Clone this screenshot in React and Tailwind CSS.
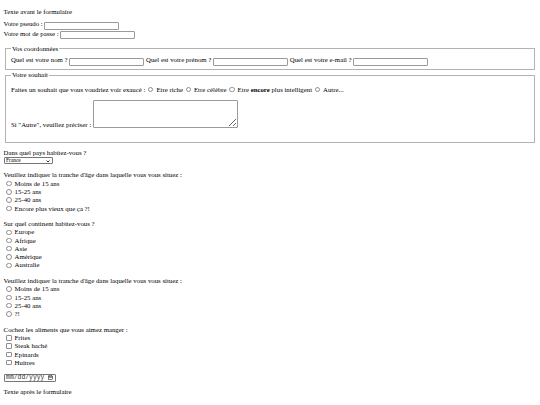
import React from 'react';

// champs et boutons à l'échelle de la capture
const txt = 'w-[75px] h-[8px] border border-[#9a9a9a] rounded-[1px] bg-white align-[-1.5px]';

const Radio = ({ name }) => (
  <input
    type="radio"
    name={name}
    className="appearance-none inline-block w-[5.4px] h-[5.4px] rounded-full border border-[#8e8e8e] bg-white ml-[2.6px] mr-[3px] align-[-0.6px]"
  />
);

const Check = () => (
  <input
    type="checkbox"
    className="appearance-none inline-block w-[5.4px] h-[5.4px] rounded-[1px] border border-[#8e8e8e] bg-white ml-[2.6px] mr-[3px] align-[-0.6px]"
  />
);

const RadioList = ({ name, items }) => (
  <>
    {items.map((item) => (
      <div key={item}>
        <Radio name={name} />
        <label>{item}</label>
      </div>
    ))}
  </>
);

const App = () => {
  return (
    <div className="font-['Liberation_Serif',serif] text-[6.8px] leading-[8.3px] text-black bg-white min-h-[405px] px-[3.6px] pt-[3px]">
      <p className="mt-[5.4px] mb-[3.4px]">Texte avant le formulaire</p>

      <form>
        <p className="mt-[3.4px] mb-[5.4px]">
          <label>Votre pseudo : </label>
          <input type="text" className={txt} />
          <br />
          <label>Votre mot de passe : </label>
          <input type="password" className={txt} />
        </p>

        <fieldset className="mx-[1px] mt-[2px] border border-[#b3b3b3] px-[5.4px] pt-[3px] pb-[3.6px]">
          <legend className="px-[1px]">Vos coordonnées</legend>
          <label>Quel est votre nom ? </label>
          <input type="text" className={txt} /> <label>Quel est votre prénom ? </label>
          <input type="text" className={txt} /> <label>Quel est votre e-mail ? </label>
          <input type="email" className={txt} />
        </fieldset>

        <fieldset className="mx-[1px] mt-[1px] border border-[#b3b3b3] px-[5.4px] pt-0 pb-[7px]">
          <legend className="px-[1px]">Votre souhait</legend>
          <p className="mt-[6.2px] mb-[6px]">
            Faites un souhait que vous voudriez voir exaucé :
            <Radio name="souhait" />
            <label>Etre riche</label>
            <Radio name="souhait" />
            <label>Etre célèbre</label>
            <Radio name="souhait" />
            <label>
              Etre <strong>encore</strong> plus intelligent
            </label>
            <Radio name="souhait" />
            <label>Autre...</label>
          </p>
          <p className="mt-[6px] mb-[5.2px]">
            <label>Si "Autre", veuillez préciser : </label>
            <textarea className="w-[145px] h-[28px] border border-[#9a9a9a] rounded-[1px] bg-white align-[-1px]" />
          </p>
        </fieldset>

        <p className="mt-[6.6px] mb-[5.6px]">
          <label>Dans quel pays habitez-vous ?</label>
          <br />
          <span className="relative inline-block align-top">
            <select className="appearance-none block w-[49px] h-[7px] text-[5.4px] leading-[5px] pl-[1.5px] border border-[#767676] rounded-[1px] bg-white">
              <option>France</option>
              <option>Espagne</option>
              <option>Italie</option>
              <option>Royaume-Uni</option>
              <option>Canada</option>
              <option>Etats-Unis</option>
            </select>
            <svg
              viewBox="0 0 8 5"
              className="absolute right-[3px] top-[2.2px] w-[4px] h-[2.5px] pointer-events-none"
              fill="none"
              stroke="#000"
              strokeWidth="1.6"
            >
              <path d="M1 1l3 3 3-3" />
            </svg>
          </span>
        </p>

        <p className="mt-[5.6px] mb-[7.2px]">
          Veuillez indiquer la tranche d'âge dans laquelle vous vous situez :
          <RadioList name="age" items={['Moins de 15 ans', '15-25 ans', '25-40 ans', 'Encore plus vieux que ça ?!']} />
        </p>

        <p className="my-[7.2px]">
          Sur quel continent habitez-vous ?
          <RadioList name="continent" items={['Europe', 'Afrique', 'Asie', 'Amérique', 'Australie']} />
        </p>

        <p className="my-[7.2px]">
          Veuillez indiquer la tranche d'âge dans laquelle vous vous situez :
          <RadioList name="age2" items={['Moins de 15 ans', '15-25 ans', '25-40 ans', '?!']} />
        </p>

        <p className="mt-[6.4px] mb-[6.4px]">
          Cochez les aliments que vous aimez manger :
          {['Frites', 'Steak haché', 'Epinards', 'Huitres'].map((item) => (
            <div key={item}>
              <Check />
              <label>{item}</label>
            </div>
          ))}
        </p>

        {/* champ date (mm/dd/yyyy + icône calendrier) */}
        <label className="inline-flex items-center justify-between w-[52px] h-[8px] pl-[1.5px] pr-[1.5px] border border-[#767676] rounded-[1px] bg-white align-top">
          <span className="font-['Liberation_Mono',monospace] text-[6.4px] leading-[6px] text-[#333]">mm/dd/yyyy</span>
          <svg viewBox="0 0 10 10" className="w-[5px] h-[5px]" fill="none" stroke="#222" strokeWidth="1.1">
            <rect x="1" y="1.8" width="8" height="7.4" />
            <path d="M1 4h8" strokeWidth="1.8" />
            <path d="M3.2 0.4v2M6.8 0.4v2" />
          </svg>
        </label>
      </form>

      <p className="mt-[6px] mb-[7.2px]">Texte après le formulaire</p>
    </div>
  );
};

export default App;
